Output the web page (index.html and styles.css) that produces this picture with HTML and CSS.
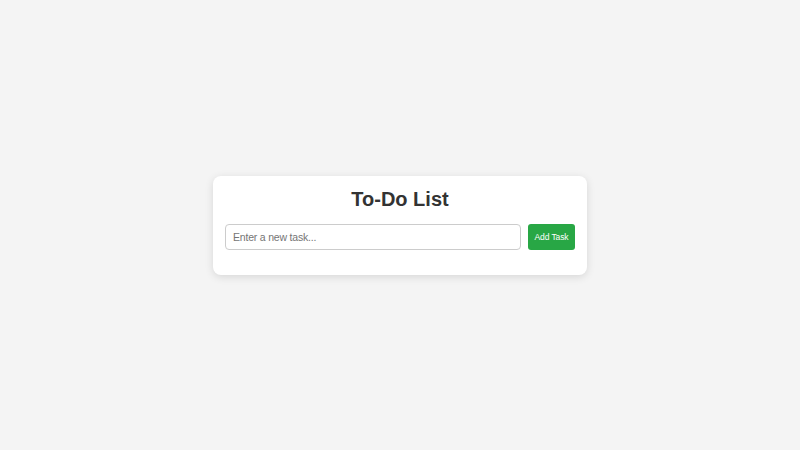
FILE: index.html
```html
<!DOCTYPE html>
<html lang="en">
<head>
  <meta charset="UTF-8">
  <title>To-Do List</title>
  <link rel="stylesheet" href="styles.css">
</head>
<body>
  <div class="container">
    <h2>To-Do List</h2>
    <div class="task-form">
      <input type="text" id="taskInput" placeholder="Enter a new task..." />
      <button onclick="addTask()">Add Task</button>
    </div>
    <ul id="taskList"></ul>
  </div>

  <script>
    function addTask() {
      const input = document.getElementById('taskInput');
      const text = input.value.trim();
      if (!text) return;

      const li = document.createElement('li');
      li.textContent = text;
      document.getElementById('taskList').appendChild(li);
      input.value = '';
    }
  </script>
</body>
</html>
```

FILE: styles.css
```css
body {
  font-family: 'Liberation Sans', Arial, sans-serif;
  margin: 0;
  background: #f4f4f4;
  min-height: 100vh;
  display: flex;
  align-items: center;
  justify-content: center;
}
.container {
  background: #ffffff;
  width: 350px;
  padding: 12px;
  border-radius: 8px;
  box-shadow: 0 2px 8px rgba(0,0,0,0.12);
}
h2 {
  text-align: center;
  font-size: 20px;
  margin: 0 0 13px;
  color: #333;
}
.task-form {
  display: flex;
  gap: 7px;
}
input {
  flex: 1;
  box-sizing: border-box;
  height: 26px;
  padding: 0 7px;
  font-size: 10.5px;
  font-family: inherit;
  letter-spacing: -0.2px;
  border: 1px solid #ccc;
  border-radius: 4px;
}
button {
  box-sizing: border-box;
  width: 47px;
  height: 26px;
  background-color: #28a745;
  color: white;
  border: none;
  border-radius: 3px;
  padding: 0;
  font-size: 8.5px;
  font-family: inherit;
  letter-spacing: -0.1px;
  cursor: pointer;
}
button:hover {
  background-color: #218838;
}
ul {
  list-style-type: none;
  padding: 0;
  margin: 13px 0 0;
}
```
